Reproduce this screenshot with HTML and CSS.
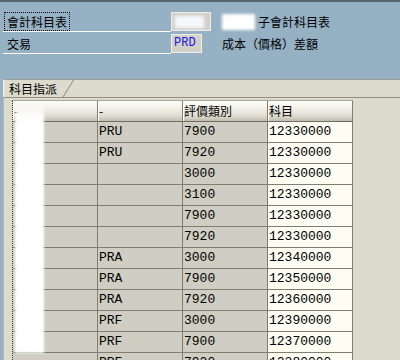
FILE: index.html
```html
<!DOCTYPE html>
<html lang="zh-Hant">
<head>
<meta charset="utf-8">
<title>科目指派</title>
<link rel="stylesheet" href="styles.css">
</head>
<body>
<div class="topbar"></div>
<div class="form">
  <div class="frow">
    <div class="flabel"><span class="lbl focus">會計科目表</span></div>
    <div class="fcell"><span class="inp inp1"><span class="inp-blur"></span></span></div>
    <div class="fdesc"><span class="desc-blur"></span><span class="desc-text">子會計科目表</span></div>
  </div>
  <div class="frow">
    <div class="flabel"><span class="lbl">交易</span></div>
    <div class="fcell"><span class="inp inp2">PRD</span></div>
    <div class="fdesc">成本（價格）差額</div>
  </div>
</div>
<div class="tabstrip">
  <span class="tab">科目指派</span>
  <svg class="slash" width="12" height="17" viewBox="0 0 12 17"><line x1="11.5" y1="0" x2="1" y2="17" stroke="#8a8a7c" stroke-width="1"/></svg>
</div>
<div class="panel">
  <div class="grid">
    <div class="row head"><div class="c">-</div><div class="c">-</div><div class="c">評價類別</div><div class="c">科目</div></div>
    <div class="row"><div class="c g"></div><div class="c g">PRU</div><div class="c g">7900</div><div class="c w">12330000</div></div>
    <div class="row"><div class="c g"></div><div class="c g">PRU</div><div class="c g">7920</div><div class="c w">12330000</div></div>
    <div class="row"><div class="c g"></div><div class="c g"></div><div class="c g">3000</div><div class="c w">12330000</div></div>
    <div class="row"><div class="c g"></div><div class="c g"></div><div class="c g">3100</div><div class="c w">12330000</div></div>
    <div class="row"><div class="c g"></div><div class="c g"></div><div class="c g">7900</div><div class="c w">12330000</div></div>
    <div class="row"><div class="c g"></div><div class="c g"></div><div class="c g">7920</div><div class="c w">12330000</div></div>
    <div class="row"><div class="c g"></div><div class="c g">PRA</div><div class="c g">3000</div><div class="c w">12340000</div></div>
    <div class="row"><div class="c g"></div><div class="c g">PRA</div><div class="c g">7900</div><div class="c w">12350000</div></div>
    <div class="row"><div class="c g"></div><div class="c g">PRA</div><div class="c g">7920</div><div class="c w">12360000</div></div>
    <div class="row"><div class="c g"></div><div class="c g">PRF</div><div class="c g">3000</div><div class="c w">12390000</div></div>
    <div class="row"><div class="c g"></div><div class="c g">PRF</div><div class="c g">7900</div><div class="c w">12370000</div></div>
    <div class="row"><div class="c g"></div><div class="c g">PRF</div><div class="c g">7920</div><div class="c w">12380000</div></div>
    <div class="redact"></div>
  </div>
</div>
</body>
</html>
```
FILE: styles.css
```css
html, body {
  margin: 0;
  padding: 0;
  height: 360px;
  overflow: hidden;
}
body {
  background: #95b1c3;
  font-family: "Noto Sans CJK TC", "Noto Sans", sans-serif;
  font-size: 12px;
  color: #000;
}
.topbar {
  height: 2px;
  background: #56646e;
}
.form {
  margin-top: 8px;
}
.frow {
  display: grid;
  grid-template-columns: 171px 51px 1fr;
  height: 22px;
}
.flabel {
  margin-left: 3px;
  border-bottom: 1px solid #ffffff;
  box-sizing: border-box;
  height: 22px;
  padding-top: 2px;
}
.lbl {
  display: inline-block;
  border: 1px dotted transparent;
  padding: 0 2px;
  margin-left: 1px;
  line-height: 17px;
  height: 17px;
}
.lbl.focus {
  border-color: #000;
}
.fcell {
  padding-top: 2px;
}
.inp {
  display: block;
  box-sizing: border-box;
  height: 19px;
  border: 1px solid #eeeeea;
  background: #d4d0c8;
  font-family: "Liberation Mono", monospace;
  font-size: 12px;
  line-height: 17px;
  color: #1515e0;
  padding-left: 2px;
}
.inp1 {
  width: 40px;
  padding: 3px 6px 2px 3px;
}
.inp-blur {
  display: block;
  height: 12px;
  background: #f6f7fd;
  filter: blur(1.5px);
}
.inp2 {
  width: 31px;
}
.fdesc {
  padding-top: 2px;
  line-height: 19px;
  white-space: nowrap;
}
.desc-blur {
  display: inline-block;
  width: 33px;
  height: 16px;
  vertical-align: -3px;
  background: #ffffff;
  filter: blur(1.5px);
}
.desc-text {
  margin-left: 3px;
}
.tabstrip {
  margin-top: 25px;
  margin-left: 3px;
  height: 17px;
  border-top: 1px solid #9c9c90;
  border-left: 1px solid #f4f4ee;
  background: #dcdbcd;
  display: flex;
  align-items: center;
}
.tab {
  padding-left: 5px;
  line-height: 17px;
}
.slash {
  display: block;
  margin-left: 5px;
}
.panel {
  margin-left: 3px;
  border-top: 1px solid #8f8f82;
  border-left: 1px solid #b8b8ac;
  background: #dcdbcd;
  height: 300px;
  padding: 2px 0 0 8px;
}
.grid {
  position: relative;
  width: 340px;
  border-top: 1px solid #a6a698;
  border-left: 1px dotted #3a3a3a;
}
.row {
  display: grid;
  grid-template-columns: repeat(4, 85px);
  height: 21px;
}
.c {
  box-sizing: border-box;
  height: 21px;
  border-right: 1px solid #7f7e70;
  border-bottom: 1px solid #7f7e70;
  padding-left: 1px;
  line-height: 20px;
  font-family: "Liberation Mono", monospace;
  font-size: 13px;
  white-space: nowrap;
  overflow: hidden;
}
.head .c {
  font-family: "Noto Sans CJK TC", "Noto Sans", sans-serif;
  font-size: 12px;
  padding-left: 1px;
  background: linear-gradient(to bottom, #fdfdf8 0%, #f3f2ea 35%, #dedcd0 75%, #bfbdaf 100%);
  box-shadow: inset 1px 0 0 #ffffff;
  border-bottom-color: #6f6e60;
}
.c.g {
  background: #d0cec2;
}
.c.w {
  background: #fdfdf3;
}
.redact {
  position: absolute;
  left: 2px;
  top: 0;
  width: 29px;
  height: 252px;
  background: linear-gradient(to bottom, rgba(255,255,255,0) 0px, rgba(255,255,255,0.9) 14px, #ffffff 22px);
  filter: blur(1px);
}
```
